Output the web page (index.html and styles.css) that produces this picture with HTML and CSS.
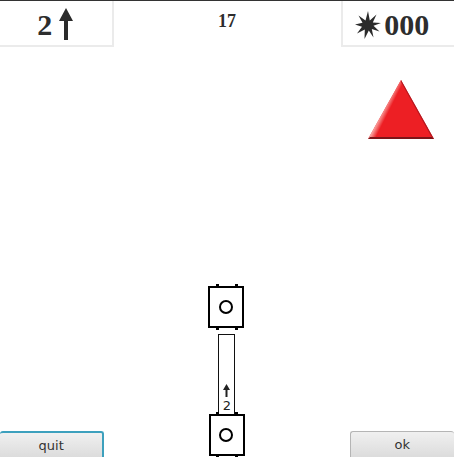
FILE: index.html
```
<!DOCTYPE html>
<html lang="en">
<head>
<meta charset="utf-8">
<title>Game board</title>
<link rel="stylesheet" href="styles.css">
</head>
<body>
<div class="game">
  <header class="bar">
    <div class="counter counter-left">
      <span>2</span>
      <svg class="arrow" width="16" height="34" viewBox="0 0 16 34" aria-hidden="true"><path d="M8 0 15 13H10V32H6V13H1Z"/></svg>
    </div>
    <div class="turn">17</div>
    <div class="counter counter-right">
      <svg class="burst" width="26" height="28" viewBox="0 0 26 28" aria-hidden="true"><path d="M13 0 14.800 9.500 21.500 3.500 17.800 11.500 26 12 18.500 14.800 24.500 20.500 16.800 18 18.500 26.500 13.800 19.500 9.500 28 9.800 18.500 2 22.500 7 15.800 0 13.500 7.500 11.800 3.500 4.500 10.500 9.500Z"/></svg>
      <span>000</span>
    </div>
  </header>
  <main class="board">
    <svg class="signal" width="68" height="62" viewBox="0 0 68 62" role="img" aria-label="Red triangle">
      <defs>
        <linearGradient id="edge" gradientUnits="userSpaceOnUse" x1="16" y1="29" x2="22" y2="32"><stop offset="0" stop-color="#fbc0bb"/><stop offset="1" stop-color="#ed1f24"/></linearGradient>
      </defs>
      <path fill="#ed1f24" d="M34 1 67 60H1Z"/>
      <path fill="url(#edge)" d="M34 1 1 60H8L36 9Z"/>
      <path fill="#b01920" d="M34 1 67 60 64 57 34 3Z"/>
      <path fill="#7d1418" d="M1 60 3 58H65L67 60Z"/>
    </svg>
    <svg class="track" width="38" height="174" viewBox="0 0 38 174" role="img" aria-label="Track with two stations">
      <rect class="rail" x="10.500" y="51.500" width="16" height="80"/>
      <path class="tie" d="M8 1h3v3h-3zM27 1h3v3h-3zM8 44h3v3h-3zM27 44h3v3h-3zM8 129h3v3h-3zM27 129h3v3h-3zM8 172h3v2h-3zM27 172h3v2h-3z"/>
      <rect class="station" x="1" y="4" width="34" height="40"/>
      <circle class="station" cx="18" cy="24" r="6"/>
      <rect class="station" x="2" y="132" width="34" height="40"/>
      <circle class="station" cx="18" cy="152" r="6"/>
      <path class="mark" d="M18.500 101 22 107H19.500V114H17.500V107H15Z"/>
      <text class="mark" x="19" y="127" text-anchor="middle">2</text>
    </svg>
  </main>
  <footer class="actions">
    <button class="btn btn-active" type="button">quit</button>
    <button class="btn btn-ok" type="button">ok</button>
  </footer>
</div>
</body>
</html>
```
FILE: styles.css
```
* { box-sizing: border-box; }

body {
  margin: 0;
  background: #fff;
  color: #2d2d2d;
  overflow: hidden;
}

.game {
  display: grid;
  grid-template: auto 1fr auto / 1fr;
  height: 100vh;
  border-top: 1px solid #333;
}

.bar {
  display: grid;
  grid-template-columns: 1fr 2fr 1fr;
  font: bold 30px/34px "Liberation Serif", serif;
}

.counter {
  display: flex;
  align-items: center;
  justify-content: center;
  height: 46px;
  padding-top: 4px;
  border: 2px solid #ebebeb;
  border-top: 0;
}

.counter-left {
  gap: 6px;
  border-left: 0;
}

.counter-right {
  gap: 3px;
  padding-right: 12px;
  border-right: 0;
}

.arrow,
.burst { fill: #2b2b2b; }

.turn {
  padding-top: 10px;
  font-size: 18px;
  line-height: 20px;
  text-align: center;
}

.board {
  display: grid;
  grid-template: 1fr / 1fr 2fr 1fr;
  grid-row: 2 / 4;
  grid-column: 1;
}

.signal {
  grid-area: 1 / 3;
  justify-self: center;
  margin-top: 32px;
  margin-left: 8px;
}

.track {
  grid-area: 1 / 2;
  place-self: end center;
}

.station {
  fill: #fff;
  stroke: #000;
  stroke-width: 2;
}

.rail {
  fill: #fff;
  stroke: #111;
}

.tie { fill: #000; }

.mark {
  fill: #222;
  font: 13px "DejaVu Sans", sans-serif;
}

.actions {
  display: flex;
  justify-content: space-between;
  grid-row: 3;
  grid-column: 1;
}

.btn {
  width: 23%;
  height: 26px;
  padding: 0;
  border: 1px solid #b5b5b5;
  border-bottom: 0;
  border-radius: 3px 3px 0 0;
  background: linear-gradient(#f0f0f0, #dcdcdc);
  color: #333;
  font: 13px "DejaVu Sans", sans-serif;
}

.btn-active {
  border: 2px solid #3da0bd;
  border-width: 2px 2px 0 0;
}

.btn-ok { border-right: 0; }
```
